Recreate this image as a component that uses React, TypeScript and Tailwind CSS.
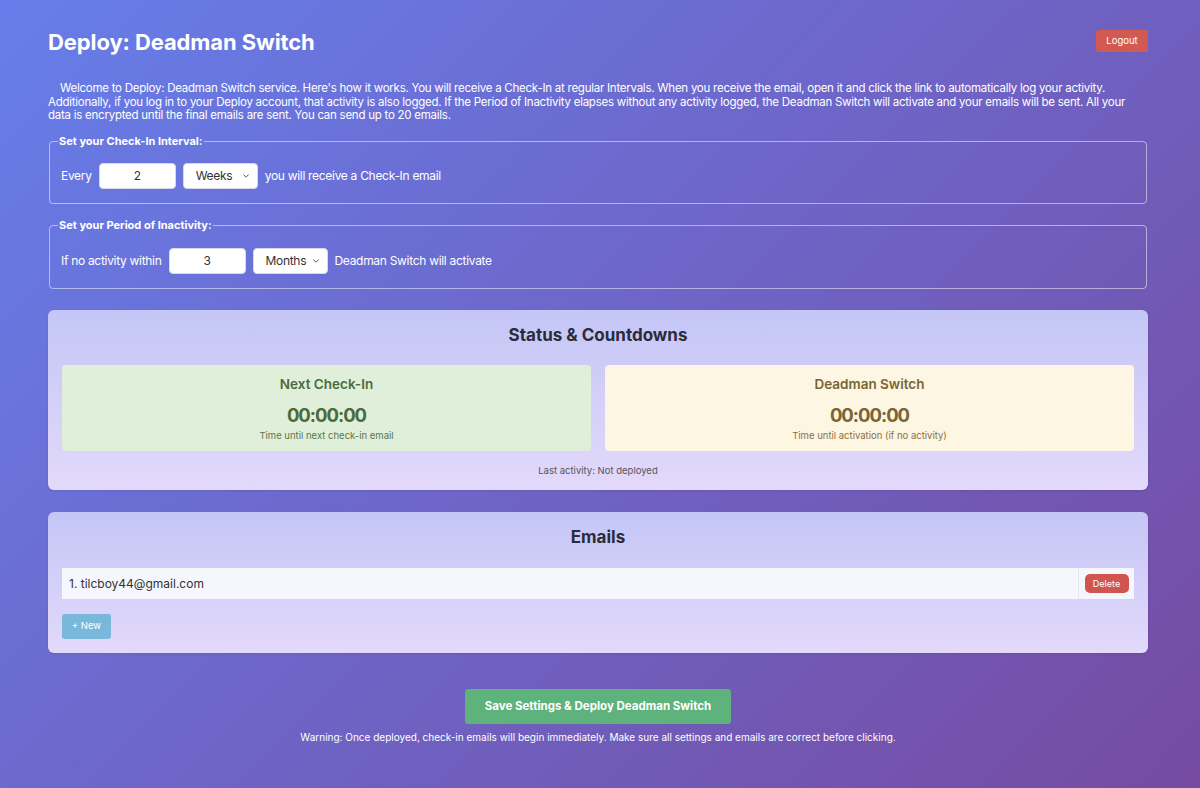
import React from "react";

const font = { fontFamily: "Inter, 'Noto Sans', Arial, sans-serif" };

function Chevron() {
  return (
    <svg width="8" height="8" viewBox="0 0 10 10" className="absolute right-[7px] top-1/2 -translate-y-1/2">
      <path d="M2 3.5 L5 6.5 L8 3.5" fill="none" stroke="#555" strokeWidth="1.2" strokeLinecap="round" />
    </svg>
  );
}

function Select({ value, width }: { value: string; width: string }) {
  return (
    <div className={`relative h-[26px] ${width} rounded-[4px] bg-white border border-[#d8d8e8] flex items-center pl-[12px] text-[12px] text-[#333]`}>
      {value}
      <Chevron />
    </div>
  );
}

function NumberBox({ value }: { value: string }) {
  return (
    <div className="h-[26px] w-[77px] rounded-[4px] bg-white border border-[#d8d8e8] flex items-center justify-center text-[12px] text-[#333]">
      {value}
    </div>
  );
}

function Setting({ legend, children }: { legend: string; children: React.ReactNode }) {
  return (
    <fieldset className="border border-white/50 rounded-[4px] px-[11px] pt-[14px] pb-[14px] mx-px">
      <legend className="text-[11px] font-bold text-white px-px -ml-[3px]">{legend}</legend>
      <div className="flex items-center gap-[7px] text-[12px] text-white tracking-[-0.3px]">{children}</div>
    </fieldset>
  );
}

function Countdown({ title, sub, tone }: { title: string; sub: string; tone: "green" | "amber" }) {
  const box = tone === "green" ? "bg-[#e0efd9] text-[#4b6b3c]" : "bg-[#fdf6e3] text-[#7a6434]";
  return (
    <div className={`${box} rounded-[4px] h-[86px] flex flex-col items-center pt-[10px]`}>
      <div className="text-[13.5px] font-semibold leading-[18px]">{title}</div>
      <div className="text-[18.5px] font-bold leading-[24px] mt-[10px] tracking-[-1px]">00:00:00</div>
      <div className="text-[9.5px] leading-[12px] mt-[3px] opacity-90">{sub}</div>
    </div>
  );
}

export default function App() {
  return (
    <div style={font} className="min-h-[788px] bg-[linear-gradient(135deg,#667eea_0%,#764ba2_100%)] pb-[40px]">
      <div className="w-[1100px] ml-[48px] pt-[28px]">
        <header className="flex items-start justify-between">
          <h1 className="text-[22px] font-bold text-white leading-[28px] tracking-[-0.1px]">Deploy: Deadman Switch</h1>
          <button className="mt-[2px] h-[22px] w-[52px] rounded-[3px] bg-[#d35a52] text-white text-[9.5px]">Logout</button>
        </header>

        <p className="mt-[26px] text-[11.5px] leading-[13.6px] text-white indent-[12px] tracking-[-0.25px]">
          Welcome to Deploy: Deadman Switch service. Here's how it works. You will receive a Check-In at regular Intervals. When you receive the email, open it and click the link to automatically log your activity. Additionally, if you log in to your Deploy account, that activity is also logged. If the Period of Inactivity elapses without any activity logged, the Deadman Switch will activate and your emails will be sent. All your data is encrypted until the final emails are sent. You can send up to 20 emails.
        </p>

        <div className="mt-[10px] flex flex-col gap-[13px]">
          <Setting legend="Set your Check-In Interval:">
            <span>Every</span>
            <NumberBox value="2" />
            <Select value="Weeks" width="w-[75px]" />
            <span>you will receive a Check-In email</span>
          </Setting>
          <Setting legend="Set your Period of Inactivity:">
            <span>If no activity within</span>
            <NumberBox value="3" />
            <Select value="Months" width="w-[75px]" />
            <span>Deadman Switch will activate</span>
          </Setting>
        </div>

        <section className="mt-[21px] rounded-[6px] bg-[linear-gradient(180deg,#c4c6f6_0%,#e3d9fb_100%)] px-[14px] pt-[14px] pb-[12px] shadow-[0_1px_3px_rgba(0,0,0,0.08)]">
          <h2 className="text-center text-[17px] font-bold text-[#2b2b3a] leading-[22px]">Status &amp; Countdowns</h2>
          <div className="mt-[19px] grid grid-cols-2 gap-[14px]">
            <Countdown title="Next Check-In" sub="Time until next check-in email" tone="green" />
            <Countdown title="Deadman Switch" sub="Time until activation (if no activity)" tone="amber" />
          </div>
          <div className="mt-[13px] text-center text-[9.5px] text-[#555]">Last activity: Not deployed</div>
        </section>

        <section className="mt-[22px] rounded-[6px] bg-[linear-gradient(180deg,#c4c6f6_0%,#e3d9fb_100%)] px-[14px] pt-[14px] pb-[14px] shadow-[0_1px_3px_rgba(0,0,0,0.08)]">
          <h2 className="text-center text-[17px] font-bold text-[#2b2b3a] leading-[22px]">Emails</h2>
          <div className="mt-[20px] flex h-[31px] bg-[#f6f6fd]">
            <div className="flex-1 flex items-center pl-[7px] text-[12px] text-[#333]">1. tilcboy44@gmail.com</div>
            <div className="w-[56px] border-l border-[#e6e6f2] flex items-center justify-center">
              <button className="h-[19px] w-[44px] rounded-[5px] bg-[#d0554f] text-white text-[9px]">Delete</button>
            </div>
          </div>
          <button className="mt-[15px] h-[25px] w-[49px] rounded-[3px] bg-[#79b8da] text-white text-[9.5px]">+ New</button>
        </section>

        <div className="mt-[36px] flex flex-col items-center">
          <button className="h-[35px] w-[266px] rounded-[3px] bg-[#5db37b] text-white text-[11.5px] font-bold">
            Save Settings &amp; Deploy Deadman Switch
          </button>
          <p className="mt-[6px] text-[10px] text-white">
            Warning: Once deployed, check-in emails will begin immediately. Make sure all settings and emails are correct before clicking.
          </p>
        </div>
      </div>
    </div>
  );
}
